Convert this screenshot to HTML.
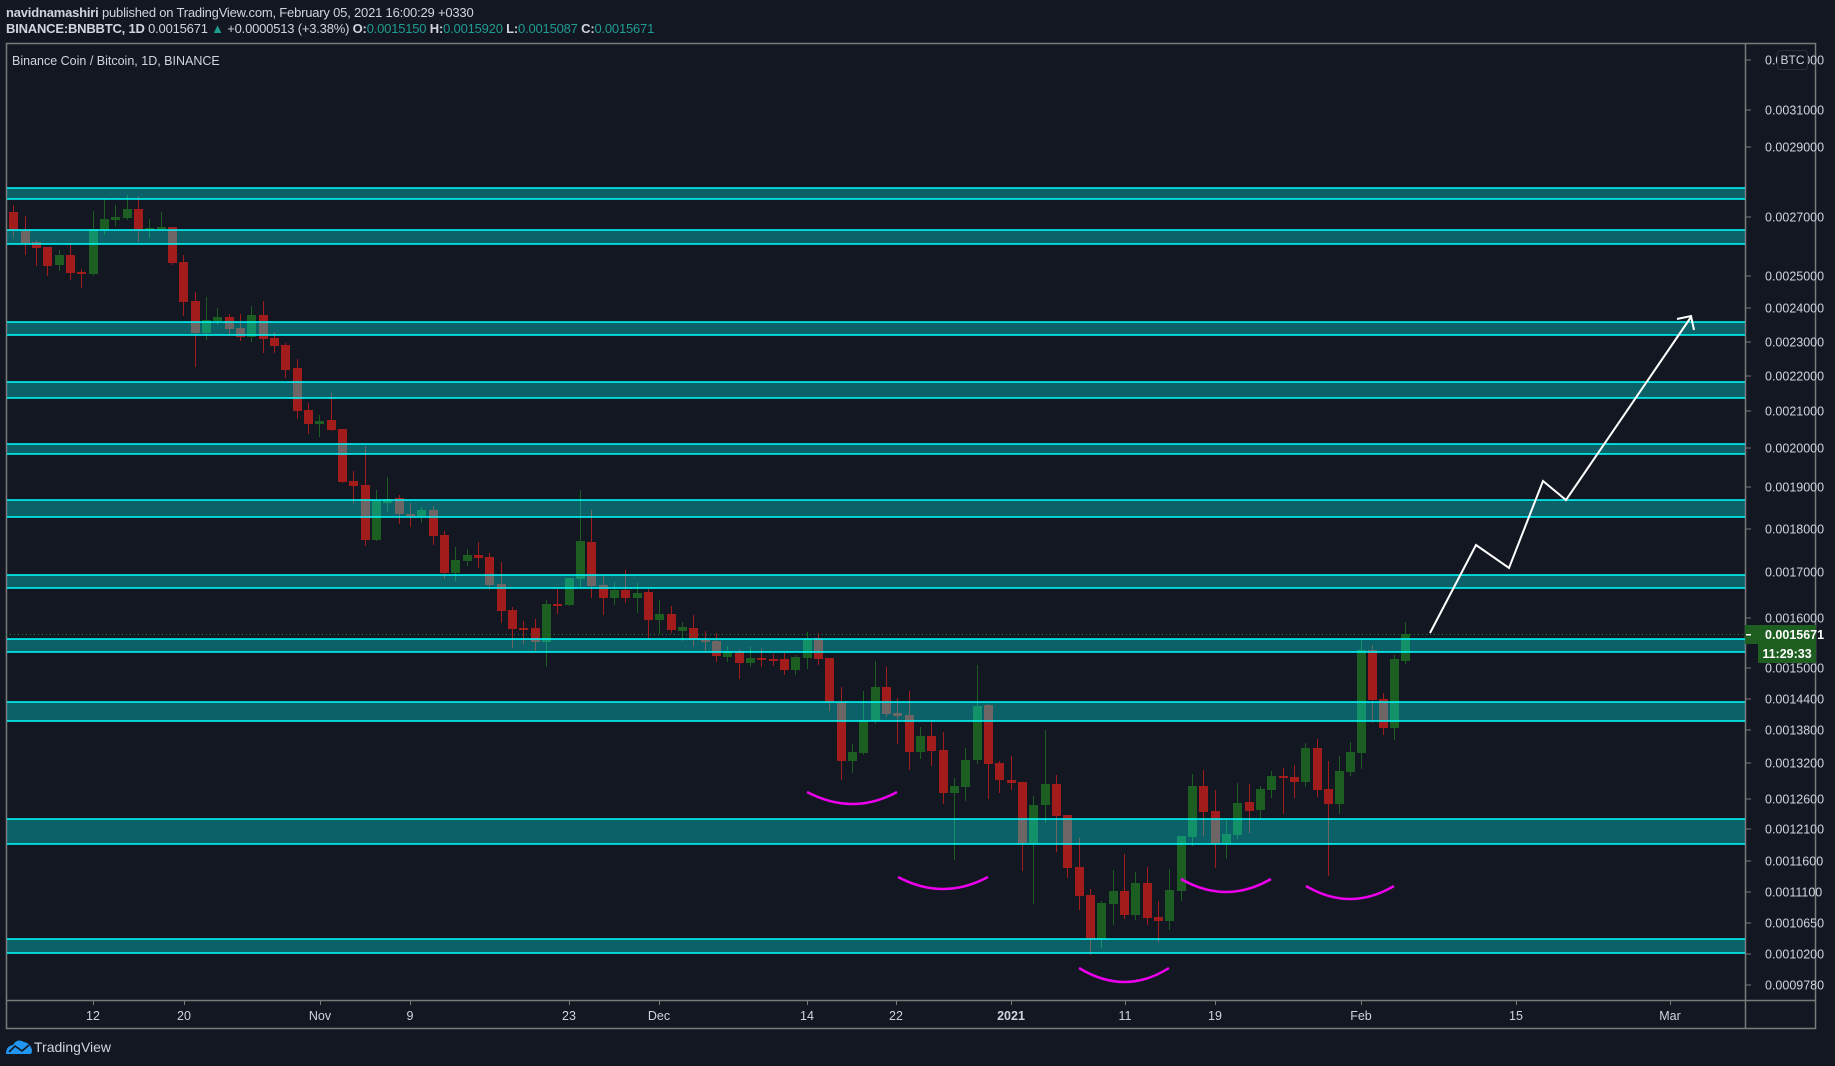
<!DOCTYPE html>
<html><head><meta charset="utf-8"><style>
html,body{margin:0;padding:0;background:#131722;width:1835px;height:1066px;overflow:hidden}
body{font-family:"Liberation Sans",sans-serif;color:#d1d4dc;position:relative}
.t{position:absolute;white-space:nowrap;font-size:13px;line-height:16px}
b{font-weight:bold}
.g{color:#1f9c90}
svg{position:absolute;left:0;top:0}
</style></head><body>
<div class="t" style="left:6px;top:5px;letter-spacing:-0.2px"><b>navidnamashiri</b> published on TradingView.com, February 05, 2021 16:00:29 +0330</div>
<div class="t" style="left:6px;top:21px;letter-spacing:-0.2px"><b>BINANCE:BNBBTC, 1D</b> 0.0015671 <span class="g">▲</span> +0.0000513 (+3.38%) <b>O:</b><span class="g">0.0015150</span> <b>H:</b><span class="g">0.0015920</span> <b>L:</b><span class="g">0.0015087</span> <b>C:</b><span class="g">0.0015671</span></div>
<svg width="1835" height="1066" viewBox="0 0 1835 1066">
<rect x="6.5" y="43.5" width="1809" height="985" fill="none" stroke="#7a7a7a" stroke-width="1.5"/>
<line x1="1745.5" y1="44" x2="1745.5" y2="1029" stroke="#7a7a7a" stroke-width="1.5"/>
<line x1="6" y1="1000.5" x2="1816" y2="1000.5" stroke="#7a7a7a" stroke-width="1.5"/>
<g fill="#a31c1c">
<rect x="9" y="212" width="9" height="18"/><rect x="21" y="231" width="9" height="12"/><rect x="32" y="242" width="9" height="6"/><rect x="43" y="247" width="9" height="19"/><rect x="66" y="255" width="9" height="18"/><rect x="77" y="272" width="9" height="2"/><rect x="134" y="209" width="9" height="21"/><rect x="168" y="227" width="9" height="36"/><rect x="179" y="262" width="9" height="40"/><rect x="191" y="301" width="9" height="32"/><rect x="225" y="317" width="9" height="12"/><rect x="236" y="328" width="9" height="9"/><rect x="259" y="315" width="9" height="24"/><rect x="270" y="338" width="9" height="8"/><rect x="281" y="345" width="9" height="25"/><rect x="293" y="368" width="9" height="43"/><rect x="304" y="410" width="9" height="14"/><rect x="327" y="420" width="9" height="10"/><rect x="338" y="429" width="9" height="53"/><rect x="349" y="481" width="9" height="5"/><rect x="361" y="485" width="9" height="55"/><rect x="395" y="498" width="9" height="16"/><rect x="406" y="514" width="9" height="2"/><rect x="429" y="510" width="9" height="26"/><rect x="440" y="535" width="9" height="38"/><rect x="474" y="555" width="9" height="3"/><rect x="485" y="557" width="9" height="28"/><rect x="497" y="584" width="9" height="27"/><rect x="508" y="610" width="9" height="19"/><rect x="519" y="628" width="9" height="2"/><rect x="531" y="628" width="9" height="14"/><rect x="553" y="604" width="9" height="2"/><rect x="587" y="542" width="9" height="44"/><rect x="599" y="585" width="9" height="13"/><rect x="621" y="590" width="9" height="8"/><rect x="644" y="592" width="9" height="28"/><rect x="667" y="614" width="9" height="16"/><rect x="689" y="628" width="9" height="11"/><rect x="701" y="640" width="9" height="2"/><rect x="712" y="641" width="9" height="15"/><rect x="735" y="651" width="9" height="12"/><rect x="757" y="658" width="9" height="2"/><rect x="769" y="659" width="9" height="2"/><rect x="780" y="659" width="9" height="11"/><rect x="814" y="638" width="9" height="21"/><rect x="825" y="658" width="9" height="44"/><rect x="837" y="702" width="9" height="59"/><rect x="882" y="687" width="9" height="27"/><rect x="893" y="713" width="9" height="3"/><rect x="905" y="715" width="9" height="37"/><rect x="927" y="736" width="9" height="15"/><rect x="939" y="750" width="9" height="43"/><rect x="984" y="705" width="9" height="59"/><rect x="995" y="763" width="9" height="17"/><rect x="1007" y="780" width="9" height="3"/><rect x="1018" y="782" width="9" height="61"/><rect x="1052" y="784" width="9" height="32"/><rect x="1063" y="815" width="9" height="53"/><rect x="1075" y="867" width="9" height="29"/><rect x="1086" y="895" width="9" height="44"/><rect x="1120" y="891" width="9" height="24"/><rect x="1143" y="883" width="9" height="35"/><rect x="1154" y="917" width="9" height="4"/><rect x="1199" y="786" width="9" height="26"/><rect x="1211" y="811" width="9" height="33"/><rect x="1245" y="802" width="9" height="9"/><rect x="1279" y="776" width="9" height="2"/><rect x="1290" y="777" width="9" height="5"/><rect x="1313" y="748" width="9" height="42"/><rect x="1324" y="789" width="9" height="15"/><rect x="1368" y="650" width="9" height="50"/><rect x="1379" y="699" width="9" height="29"/>
</g>
<path stroke="#a31c1c" stroke-width="1" fill="none" d="M13.5,205V237M25.5,216V255M36.5,240V266M47.5,247V276M70.5,245V280M81.5,269V288M138.5,196V242M172.5,227V265M183.5,255V316M195.5,292V367M229.5,314V335M240.5,314V341M263.5,301V353M274.5,332V353M285.5,343V378M297.5,359V419M308.5,403V434M331.5,393V431M342.5,429V483M353.5,471V503M365.5,446V546M399.5,495V524M410.5,503V527M433.5,506V545M444.5,531V579M478.5,542V568M489.5,553V590M501.5,562V623M512.5,607V648M523.5,621V644M535.5,619V651M557.5,589V614M591.5,510V598M603.5,576V615M625.5,570V603M648.5,589V638M671.5,606V633M693.5,615V646M705.5,631V652M716.5,633V662M739.5,649V679M761.5,649V667M773.5,654V666M784.5,653V675M818.5,633V665M829.5,658V711M841.5,687V780M886.5,667V717M897.5,698V744M909.5,691V770M931.5,722V766M943.5,732V804M988.5,704V799M999.5,761V793M1011.5,756V790M1022.5,782V871M1056.5,775V852M1067.5,815V878M1079.5,838V910M1090.5,889V955M1124.5,854V919M1147.5,867V925M1158.5,901V942M1203.5,770V836M1215.5,790V868M1249.5,784V833M1283.5,768V814M1294.5,765V798M1317.5,739V797M1328.5,761V876M1372.5,645V723M1383.5,693V735"/>
<g fill="#1c5e21">
<rect x="55" y="255" width="9" height="10"/><rect x="89" y="229" width="9" height="45"/><rect x="100" y="219" width="9" height="11"/><rect x="111" y="217" width="9" height="3"/><rect x="123" y="209" width="9" height="9"/><rect x="145" y="228" width="9" height="2"/><rect x="157" y="227" width="9" height="2"/><rect x="202" y="320" width="9" height="13"/><rect x="213" y="317" width="9" height="4"/><rect x="247" y="315" width="9" height="22"/><rect x="315" y="421" width="9" height="3"/><rect x="372" y="500" width="9" height="40"/><rect x="383" y="499" width="9" height="4"/><rect x="417" y="510" width="9" height="6"/><rect x="451" y="560" width="9" height="13"/><rect x="463" y="555" width="9" height="6"/><rect x="542" y="604" width="9" height="38"/><rect x="565" y="578" width="9" height="27"/><rect x="576" y="541" width="9" height="38"/><rect x="610" y="590" width="9" height="8"/><rect x="633" y="593" width="9" height="5"/><rect x="655" y="614" width="9" height="6"/><rect x="678" y="627" width="9" height="4"/><rect x="723" y="651" width="9" height="6"/><rect x="746" y="658" width="9" height="5"/><rect x="791" y="657" width="9" height="13"/><rect x="803" y="639" width="9" height="19"/><rect x="848" y="752" width="9" height="9"/><rect x="859" y="720" width="9" height="33"/><rect x="871" y="687" width="9" height="34"/><rect x="916" y="736" width="9" height="16"/><rect x="950" y="786" width="9" height="7"/><rect x="961" y="760" width="9" height="27"/><rect x="973" y="706" width="9" height="54"/><rect x="1029" y="805" width="9" height="38"/><rect x="1041" y="784" width="9" height="21"/><rect x="1097" y="903" width="9" height="36"/><rect x="1109" y="891" width="9" height="13"/><rect x="1131" y="883" width="9" height="32"/><rect x="1165" y="890" width="9" height="31"/><rect x="1177" y="836" width="9" height="55"/><rect x="1188" y="786" width="9" height="51"/><rect x="1222" y="834" width="9" height="10"/><rect x="1233" y="803" width="9" height="32"/><rect x="1256" y="789" width="9" height="21"/><rect x="1267" y="776" width="9" height="14"/><rect x="1301" y="748" width="9" height="34"/><rect x="1335" y="771" width="9" height="33"/><rect x="1346" y="752" width="9" height="20"/><rect x="1357" y="650" width="9" height="103"/><rect x="1390" y="659" width="9" height="69"/><rect x="1401" y="634" width="9" height="27"/>
</g>
<path stroke="#1c5e21" stroke-width="1" fill="none" d="M59.5,250V271M93.5,211V276M104.5,198V235M115.5,205V226M127.5,195V220M149.5,219V238M161.5,212V230M206.5,297V340M217.5,308V325M251.5,306V342M319.5,415V437M376.5,490V541M387.5,477V512M421.5,507V523M455.5,547V581M467.5,549V566M546.5,600V667M569.5,578V606M580.5,490V587M614.5,582V605M637.5,583V613M659.5,600V634M682.5,622V641M727.5,646V662M750.5,647V667M795.5,655V675M807.5,632V669M852.5,744V773M863.5,691V755M875.5,661V724M920.5,727V759M954.5,778V860M965.5,748V801M977.5,665V764M1033.5,796V904M1045.5,730V823M1101.5,901V948M1113.5,870V925M1135.5,872V920M1169.5,869V930M1181.5,836V901M1192.5,774V846M1226.5,820V859M1237.5,783V839M1260.5,786V818M1271.5,771V798M1305.5,743V787M1339.5,756V814M1350.5,742V776M1361.5,640V769M1394.5,655V740M1405.5,622V664"/>
<line x1="6" y1="634.5" x2="1745" y2="634.5" stroke="#1c7a24" stroke-width="1" stroke-dasharray="1,3"/>
<g fill="rgba(0,255,255,0.32)">
<rect x="7" y="188" width="1738" height="11"/><rect x="7" y="230" width="1738" height="14"/><rect x="7" y="322" width="1738" height="13"/><rect x="7" y="382" width="1738" height="16"/><rect x="7" y="444" width="1738" height="10"/><rect x="7" y="500" width="1738" height="17"/><rect x="7" y="575" width="1738" height="13"/><rect x="7" y="639" width="1738" height="13"/><rect x="7" y="702" width="1738" height="19"/><rect x="7" y="819" width="1738" height="25"/><rect x="7" y="939" width="1738" height="14"/>
</g>
<path stroke="#00ffff" stroke-width="1.5" d="M7,188H1745M7,199H1745M7,230H1745M7,244H1745M7,322H1745M7,335H1745M7,382H1745M7,398H1745M7,444H1745M7,454H1745M7,500H1745M7,517H1745M7,575H1745M7,588H1745M7,639H1745M7,652H1745M7,702H1745M7,721H1745M7,819H1745M7,844H1745M7,939H1745M7,953H1745"/>
<g stroke="#ee00ee" stroke-width="2.5" fill="none">
<path d="M807,792Q853,816 897,792"/><path d="M898,877Q943,901 988,877"/><path d="M1079,968Q1125,996 1169,968"/><path d="M1181,879Q1226,905 1271,879"/><path d="M1306,886Q1350,912 1394,886"/>
</g>
<path d="M1430,633L1476,545L1509,568L1543,481L1566,500L1691,317M1677,319L1691,316L1694,330" stroke="#fff" stroke-width="2" fill="none"/>
<g stroke="#7a7a7a" stroke-width="1"><path d="M1746,60h5M1746,110h5M1746,147h5M1746,217h5M1746,276h5M1746,308h5M1746,342h5M1746,376h5M1746,411h5M1746,448h5M1746,487h5M1746,529h5M1746,618h5M1746,668h5M1746,699h5M1746,730h5M1746,763h5M1746,799h5M1746,829h5M1746,861h5M1746,892h5M1746,923h5M1746,954h5M1746,985h5"/>
<path d="M93.5,1001v4M184.5,1001v4M320.5,1001v4M410.5,1001v4M569.5,1001v4M659.5,1001v4M807.5,1001v4M896.5,1001v4M1011.5,1001v4M1125.5,1001v4M1215.5,1001v4M1361.5,1001v4M1516.5,1001v4M1670.5,1001v4"/></g>
<g font-family="Liberation Sans,sans-serif" font-size="12.5" fill="#d1d4dc">
<text x="1765" y="64.5">0.0033000</text><text x="1765" y="114.5">0.0031000</text><text x="1765" y="151.5">0.0029000</text><text x="1765" y="221.5">0.0027000</text><text x="1765" y="280.5">0.0025000</text><text x="1765" y="312.5">0.0024000</text><text x="1765" y="346.5">0.0023000</text><text x="1765" y="380.5">0.0022000</text><text x="1765" y="415.5">0.0021000</text><text x="1765" y="452.5">0.0020000</text><text x="1765" y="491.5">0.0019000</text><text x="1765" y="533.5">0.0018000</text><text x="1765" y="576.5">0.0017000</text><text x="1765" y="622.5">0.0016000</text><text x="1765" y="672.5">0.0015000</text><text x="1765" y="703.5">0.0014400</text><text x="1765" y="734.5">0.0013800</text><text x="1765" y="767.5">0.0013200</text><text x="1765" y="803.5">0.0012600</text><text x="1765" y="833.5">0.0012100</text><text x="1765" y="865.5">0.0011600</text><text x="1765" y="896.5">0.0011100</text><text x="1765" y="927.5">0.0010650</text><text x="1765" y="958.5">0.0010200</text><text x="1765" y="989.5">0.0009780</text>
</g>
<rect x="1777.5" y="50.5" width="30" height="19" rx="3" fill="#131722" stroke="#2a2e39"/>
<text x="1792.5" y="64" text-anchor="middle" font-family="Liberation Sans,sans-serif" font-size="12" fill="#d1d4dc">BTC</text>
<rect x="1745" y="625" width="71" height="19" fill="#1e5e21"/>
<text x="1765" y="639" font-family="Liberation Sans,sans-serif" font-size="12.5" font-weight="bold" fill="#fff">0.0015671</text>
<rect x="1746" y="634" width="5" height="1.5" fill="#fff"/>
<rect x="1758" y="644" width="58" height="19" fill="#1e5e21"/>
<text x="1787" y="658" text-anchor="middle" font-family="Liberation Sans,sans-serif" font-size="12.5" font-weight="bold" fill="#fff">11:29:33</text>
<g font-family="Liberation Sans,sans-serif" font-size="12.5" fill="#d1d4dc" text-anchor="middle">
<text x="93" y="1020">12</text><text x="184" y="1020">20</text><text x="320" y="1020">Nov</text><text x="410" y="1020">9</text><text x="569" y="1020">23</text><text x="659" y="1020">Dec</text><text x="807" y="1020">14</text><text x="896" y="1020">22</text><text x="1011" y="1020" font-weight="bold">2021</text><text x="1125" y="1020">11</text><text x="1215" y="1020">19</text><text x="1361" y="1020">Feb</text><text x="1516" y="1020">15</text><text x="1670" y="1020">Mar</text>
</g>
<path d="M6,1054 Q6,1046 13,1045 Q17,1038 24,1042 Q30,1043 32,1050 Q32,1054 30,1054Z" fill="#2196f3"/>
<path d="M9,1052L15,1046L22,1051L29,1045" stroke="#131722" stroke-width="1.6" fill="none"/>
</svg>
<div class="t" style="left:12px;top:53px;font-size:12.5px">Binance Coin / Bitcoin, 1D, BINANCE</div>
<div class="t" style="left:34px;top:1039px;font-size:14px">TradingView</div>
</body></html>
